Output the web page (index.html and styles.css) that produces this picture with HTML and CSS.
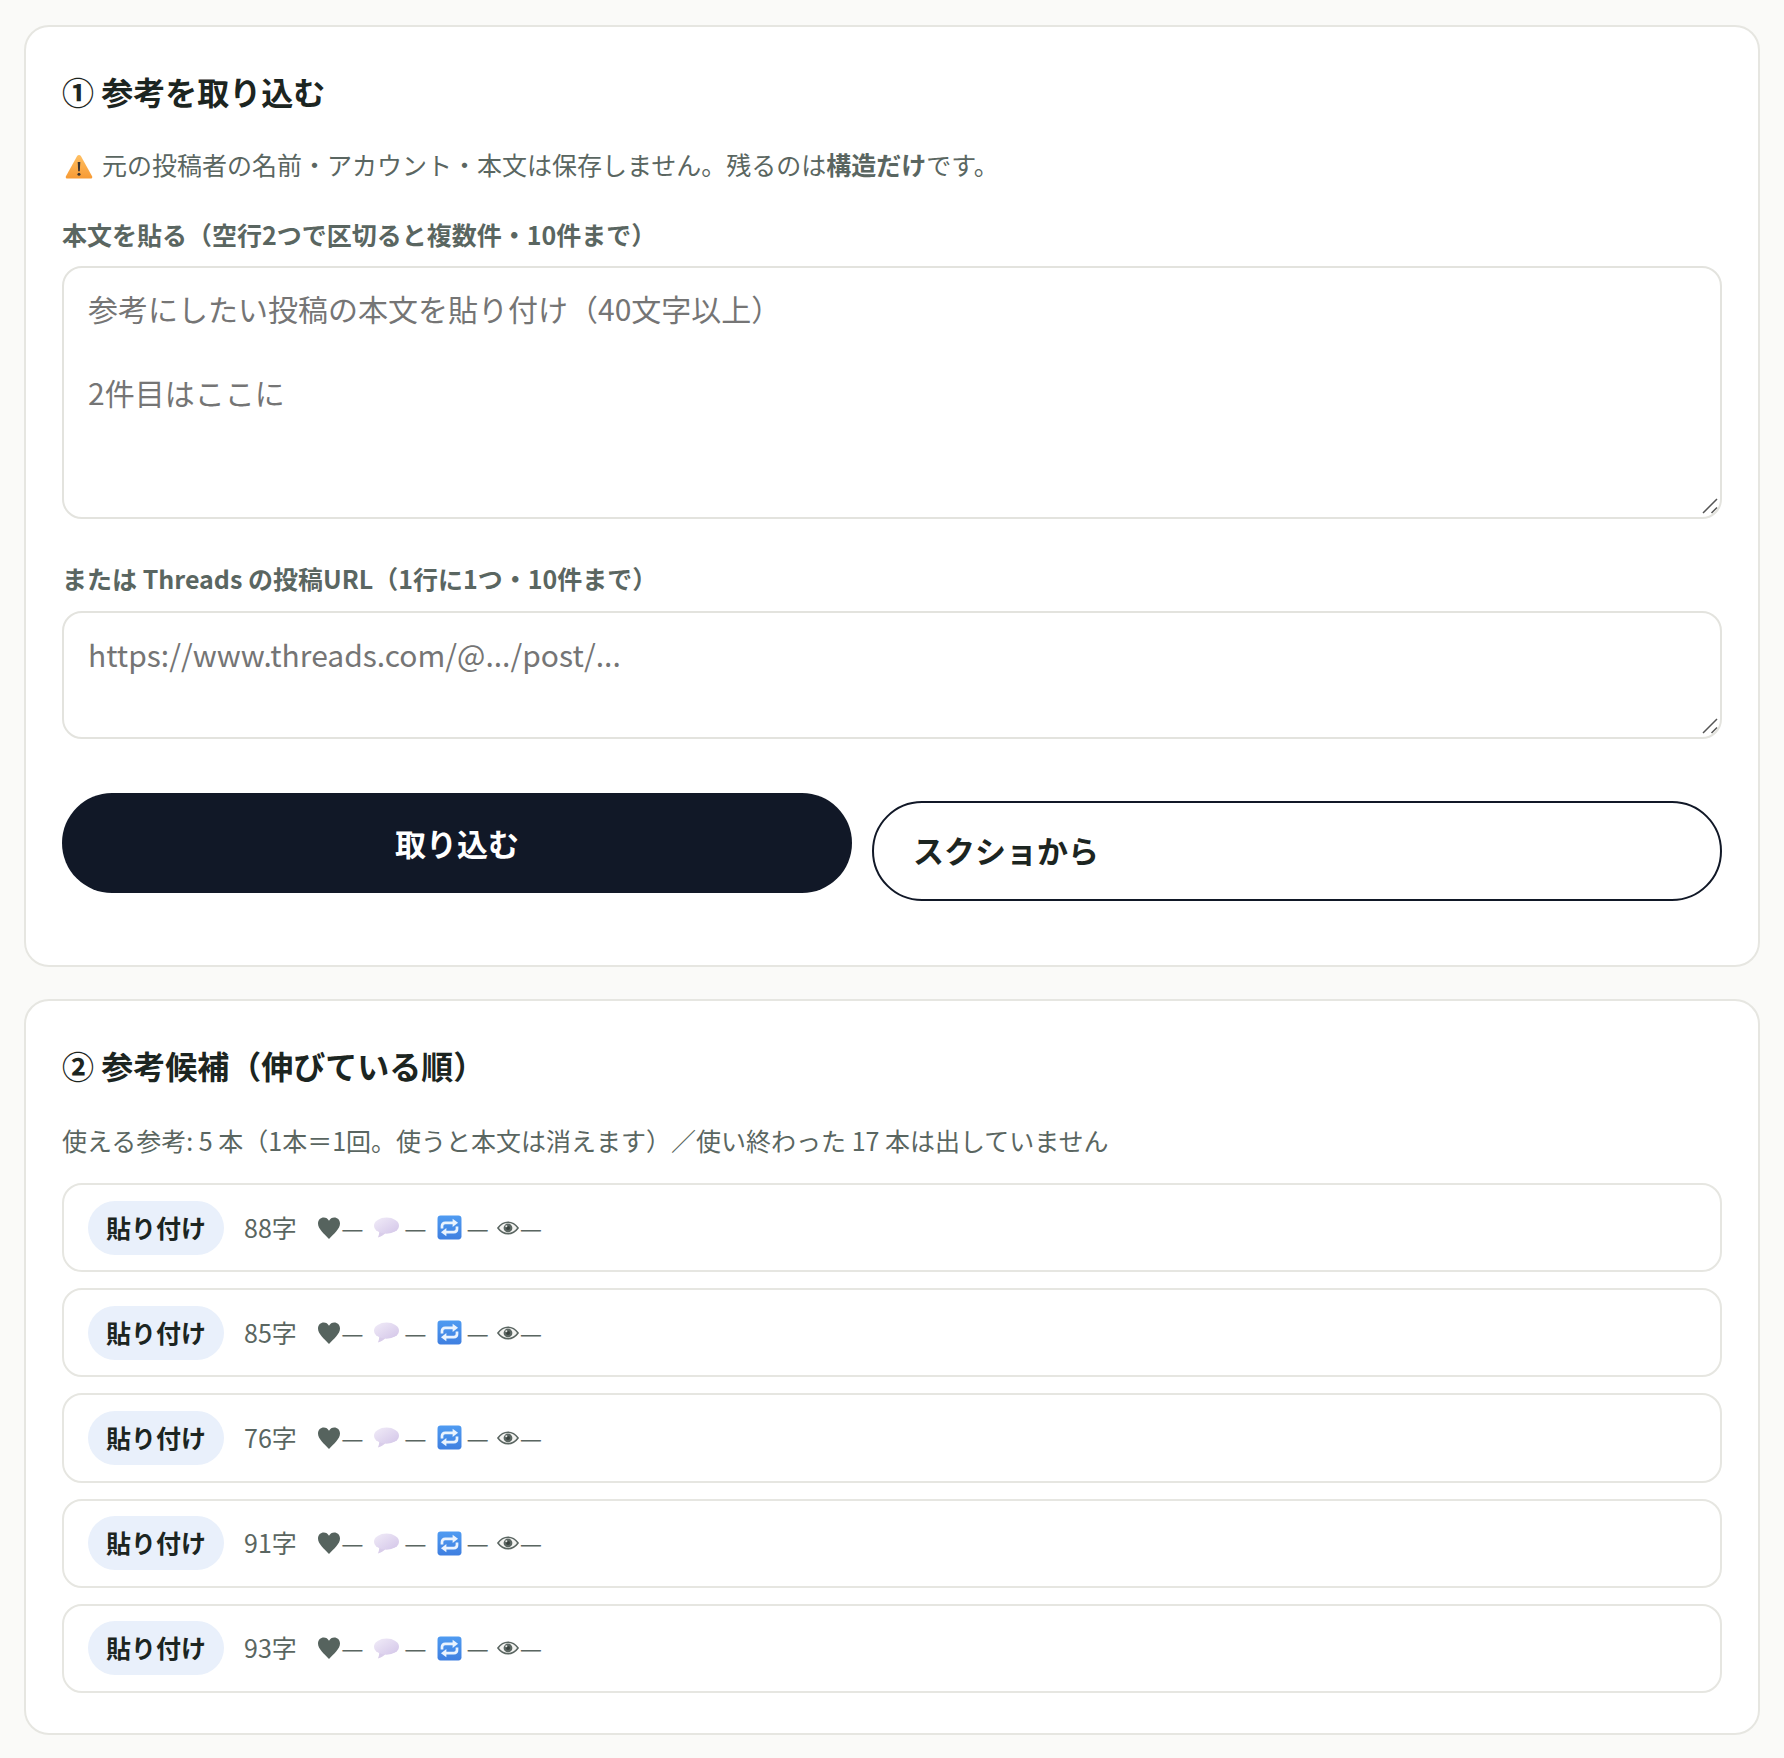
FILE: index.html
```html
<!DOCTYPE html>
<html lang="ja">

<head>
    <meta charset="UTF-8">
    <meta name="viewport" content="width=device-width, initial-scale=1.0">
    <title>参考を取り込む</title>
    <link rel="stylesheet" href="styles.css">
</head>

<body>
    <svg class="defs" aria-hidden="true">
        <defs>
            <linearGradient id="warn-fill" x1="0" y1="0" x2="0" y2="1">
                <stop offset="0" stop-color="#ffc063"/>
                <stop offset="1" stop-color="#f79a34"/>
            </linearGradient>
            <linearGradient id="bubble-fill" x1="0" y1="0" x2="1" y2="1">
                <stop offset="0" stop-color="#f1ecf8"/>
                <stop offset="1" stop-color="#d3c5e8"/>
            </linearGradient>
            <linearGradient id="repeat-fill" x1="0" y1="0" x2="0" y2="1">
                <stop offset="0" stop-color="#4f9bf1"/>
                <stop offset="1" stop-color="#3f7fe0"/>
            </linearGradient>
            <symbol id="i-warn" viewBox="0 0 24 24">
                <path d="M12 2.5c.7 0 1.2.4 1.6 1l9.6 17.2c.5 1 0 2-1.2 2H2c-1.200 0-1.700-1-1.200-2L10.400 3.500c.4-.6.9-1 1.600-1z" fill="url(#warn-fill)"/>
                <path d="M10.900 8.500h2.200l-.4 8h-1.400z" fill="#3a3330"/>
                <circle cx="12" cy="19" r="1.300" fill="#3a3330"/>
            </symbol>
            <symbol id="i-heart" viewBox="0 0 24 24">
                <path d="M12 23C7 17.500 1 13 1 7.500 1 3.800 3.700 1.500 6.700 1.500c2.300 0 4.200 1.200 5.300 3.300 1.100-2.100 3-3.300 5.300-3.300 3 0 5.700 2.300 5.700 6 0 5.500-6 10-11 15.500z" fill="#56635e"/>
            </symbol>
            <symbol id="i-bubble" viewBox="0 0 24 24">
                <path d="M5 14c.3 3-.2 5.500-1.300 7.500 3-.6 5.500-2.200 7.300-4z" fill="#d9cdea"/>
                <ellipse cx="12" cy="10.200" rx="12" ry="7.700" fill="url(#bubble-fill)"/>
            </symbol>
            <symbol id="i-repeat" viewBox="0 0 24 24">
                <rect x="0.500" y="0.500" width="23" height="23" rx="3" fill="url(#repeat-fill)"/>
                <path d="M4.800 13v-2.500c0-1.900 1.200-3 3-3h8" fill="none" stroke="#eaf3fe" stroke-width="2.600"/>
                <path d="M15 3.500l5.200 4-5.200 4z" fill="#eaf3fe"/>
                <path d="M19.200 11v2.500c0 1.900-1.200 3-3 3h-8" fill="none" stroke="#eaf3fe" stroke-width="2.600"/>
                <path d="M9 12.500l-5.200 4 5.200 4z" fill="#eaf3fe"/>
            </symbol>
            <symbol id="i-eye" viewBox="0 0 24 24">
                <path d="M1 12c3-4.200 6.800-6.300 11-6.300S20 7.800 23 12c-3 4.200-6.800 6.300-11 6.300S4 16.200 1 12z" fill="#f4f4f2" stroke="#5b6662" stroke-width="1.700"/>
                <circle cx="12" cy="12" r="4.800" fill="#5b6662"/>
                <circle cx="12" cy="12" r="2.200" fill="#39413e"/>
                <circle cx="10.200" cy="10.200" r="1.100" fill="#e6e6e3"/>
            </symbol>
            <symbol id="i-grip" viewBox="0 0 16 16">
                <path d="M1 15L15 1M9.500 15L15 9.500" fill="none" stroke="#555" stroke-width="1.500"/>
            </symbol>
        </defs>
    </svg>

    <main class="page">
        <section class="card card-import">
            <h2 class="card-title">① 参考を取り込む</h2>
            <p class="note"><svg class="ic ic-warn"><use href="#i-warn"/></svg>元の投稿者の名前・アカウント・本文は保存しません。残るのは<strong>構造だけ</strong>です。</p>

            <label class="field-label" for="bodyText">本文を貼る（空行2つで区切ると複数件・10件まで）</label>
            <div class="field">
                <textarea id="bodyText" class="input input-body" placeholder="参考にしたい投稿の本文を貼り付け（40文字以上）&#10;&#10;2件目はここに"></textarea>
                <svg class="grip"><use href="#i-grip"/></svg>
            </div>

            <label class="field-label field-label-url" for="urlText">または Threads の投稿URL（1行に1つ・10件まで）</label>
            <div class="field field-url">
                <textarea id="urlText" class="input input-url" placeholder="https://www.threads.com/@.../post/..."></textarea>
                <svg class="grip"><use href="#i-grip"/></svg>
            </div>

            <div class="actions">
                <button class="btn btn-primary">取り込む</button>
                <label class="btn btn-outline">スクショから</label>
            </div>
        </section>

        <section class="card card-list">
            <h2 class="card-title">② 参考候補（伸びている順）</h2>
            <p class="count">使える参考: 5 本（1本＝1回。使うと本文は消えます）／使い終わった 17 本は出していません</p>

            <ul class="ref-list">
                <li class="ref-row">
                    <button class="pill">貼り付け</button>
                    <span class="chars">88字</span>
                    <span class="stats"><svg class="ic ic-heart"><use href="#i-heart"/></svg>—<svg class="ic ic-bubble"><use href="#i-bubble"/></svg>—<svg class="ic ic-repeat"><use href="#i-repeat"/></svg>—<svg class="ic ic-eye"><use href="#i-eye"/></svg>—</span>
                </li>
                <li class="ref-row">
                    <button class="pill">貼り付け</button>
                    <span class="chars">85字</span>
                    <span class="stats"><svg class="ic ic-heart"><use href="#i-heart"/></svg>—<svg class="ic ic-bubble"><use href="#i-bubble"/></svg>—<svg class="ic ic-repeat"><use href="#i-repeat"/></svg>—<svg class="ic ic-eye"><use href="#i-eye"/></svg>—</span>
                </li>
                <li class="ref-row">
                    <button class="pill">貼り付け</button>
                    <span class="chars">76字</span>
                    <span class="stats"><svg class="ic ic-heart"><use href="#i-heart"/></svg>—<svg class="ic ic-bubble"><use href="#i-bubble"/></svg>—<svg class="ic ic-repeat"><use href="#i-repeat"/></svg>—<svg class="ic ic-eye"><use href="#i-eye"/></svg>—</span>
                </li>
                <li class="ref-row">
                    <button class="pill">貼り付け</button>
                    <span class="chars">91字</span>
                    <span class="stats"><svg class="ic ic-heart"><use href="#i-heart"/></svg>—<svg class="ic ic-bubble"><use href="#i-bubble"/></svg>—<svg class="ic ic-repeat"><use href="#i-repeat"/></svg>—<svg class="ic ic-eye"><use href="#i-eye"/></svg>—</span>
                </li>
                <li class="ref-row">
                    <button class="pill">貼り付け</button>
                    <span class="chars">93字</span>
                    <span class="stats"><svg class="ic ic-heart"><use href="#i-heart"/></svg>—<svg class="ic ic-bubble"><use href="#i-bubble"/></svg>—<svg class="ic ic-repeat"><use href="#i-repeat"/></svg>—<svg class="ic ic-eye"><use href="#i-eye"/></svg>—</span>
                </li>
            </ul>
        </section>
    </main>
</body>

</html>
```

FILE: styles.css
```css
* {
    box-sizing: border-box;
}

body {
    margin: 0;
    background-color: #fafaf8;
    color: #1c2521;
    font-family: "Noto Sans CJK JP", "Noto Sans", sans-serif;
    font-size: 25px;
}

/* only holds the symbols, has to stay rendered or the gradients die */
.defs {
    display: block;
    width: 0;
    height: 0;
}

.page {
    display: flex;
    flex-direction: column;
    gap: 32px;
    padding: 25px 24px 0;
}

.card {
    background-color: #ffffff;
    border: 2px solid #e6e6e1;
    border-radius: 25px;
    padding: 0 36px;
}

.card-import {
    height: 942px;
}

.card-list {
    height: 736px;
}

.card-title {
    margin: 0;
    padding-top: 40.600px;
    font-size: 32px;
    line-height: 46px;
    font-weight: 700;
}

.note {
    margin: 32px 0 0;
    color: #5a6661;
    line-height: 36px;
}

.note strong {
    font-weight: 700;
}

.ic {
    display: inline-block;
    vertical-align: middle;
}

.ic-warn {
    width: 28px;
    height: 28px;
    margin: 0 9px 0 3px;
    vertical-align: -5px;
}

.field-label {
    display: block;
    margin-top: 34px;
    color: #5a6661;
    font-weight: 700;
    line-height: 36px;
}

.field-label-url {
    margin-top: 41px;
}

.field {
    position: relative;
    margin-top: 14px;
}

.field-url {
    margin-top: 15px;
}

.input {
    display: block;
    width: 100%;
    padding: 19px 24px 16px;
    border: 2px solid #e3e3de;
    border-radius: 20px;
    font-family: inherit;
    font-size: 30px;
    line-height: 42px;
    background-color: #ffffff;
    color: #1c2521;
    resize: none;
}

.input-body {
    height: 253px;
}

.input-url {
    height: 128px;
    padding-top: 20px;
}

.grip {
    position: absolute;
    right: 4px;
    bottom: 5px;
    width: 16px;
    height: 16px;
}

.actions {
    display: flex;
    gap: 20px;
    margin-top: 54px;
}

.btn {
    height: 100px;
    border-radius: 50px;
    font-family: inherit;
    font-size: 31px;
    font-weight: 700;
}

.btn-primary {
    width: 790px;
    border: none;
    background-color: #111827;
    color: #ffffff;
}

.btn-outline {
    flex: 1;
    display: flex;
    align-items: center;
    margin-top: 8px;
    padding: 0 39px 2px;
    border: 2px solid #111827;
    background-color: #ffffff;
    color: #1c2521;
}

.count {
    margin: 34.400px 0 0;
    color: #5a6661;
    line-height: 36px;
}

.ref-list {
    list-style: none;
    display: flex;
    flex-direction: column;
    gap: 16px;
    margin: 25px 0 0;
    padding: 0;
}

.ref-row {
    display: flex;
    align-items: center;
    gap: 20px;
    height: 89.200px;
    padding: 0 24px;
    border: 2px solid #e6e6e1;
    border-radius: 20px;
    color: #5a6661;
}

.pill {
    height: 54px;
    padding: 0 18px 2px;
    border: none;
    border-radius: 27px;
    background-color: #e9f0fb;
    color: #1c2521;
    font-family: inherit;
    font-size: 25px;
    font-weight: 700;
}

.chars {
    margin-right: 0.500px;
    margin-bottom: 2px;
}

.stats {
    display: flex;
    align-items: center;
    margin-bottom: 2px;
}

.ic-heart {
    width: 24px;
    height: 24px;
    margin-top: 2px;
}

.ic-bubble {
    width: 25px;
    height: 25px;
    margin: 2px 5px 0 10.500px;
}

.ic-repeat {
    width: 25px;
    height: 25px;
    margin: 2px 5px 0 10px;
}

.ic-eye {
    width: 22px;
    height: 22px;
    margin: 2px 1px 0 8px;
}
```
